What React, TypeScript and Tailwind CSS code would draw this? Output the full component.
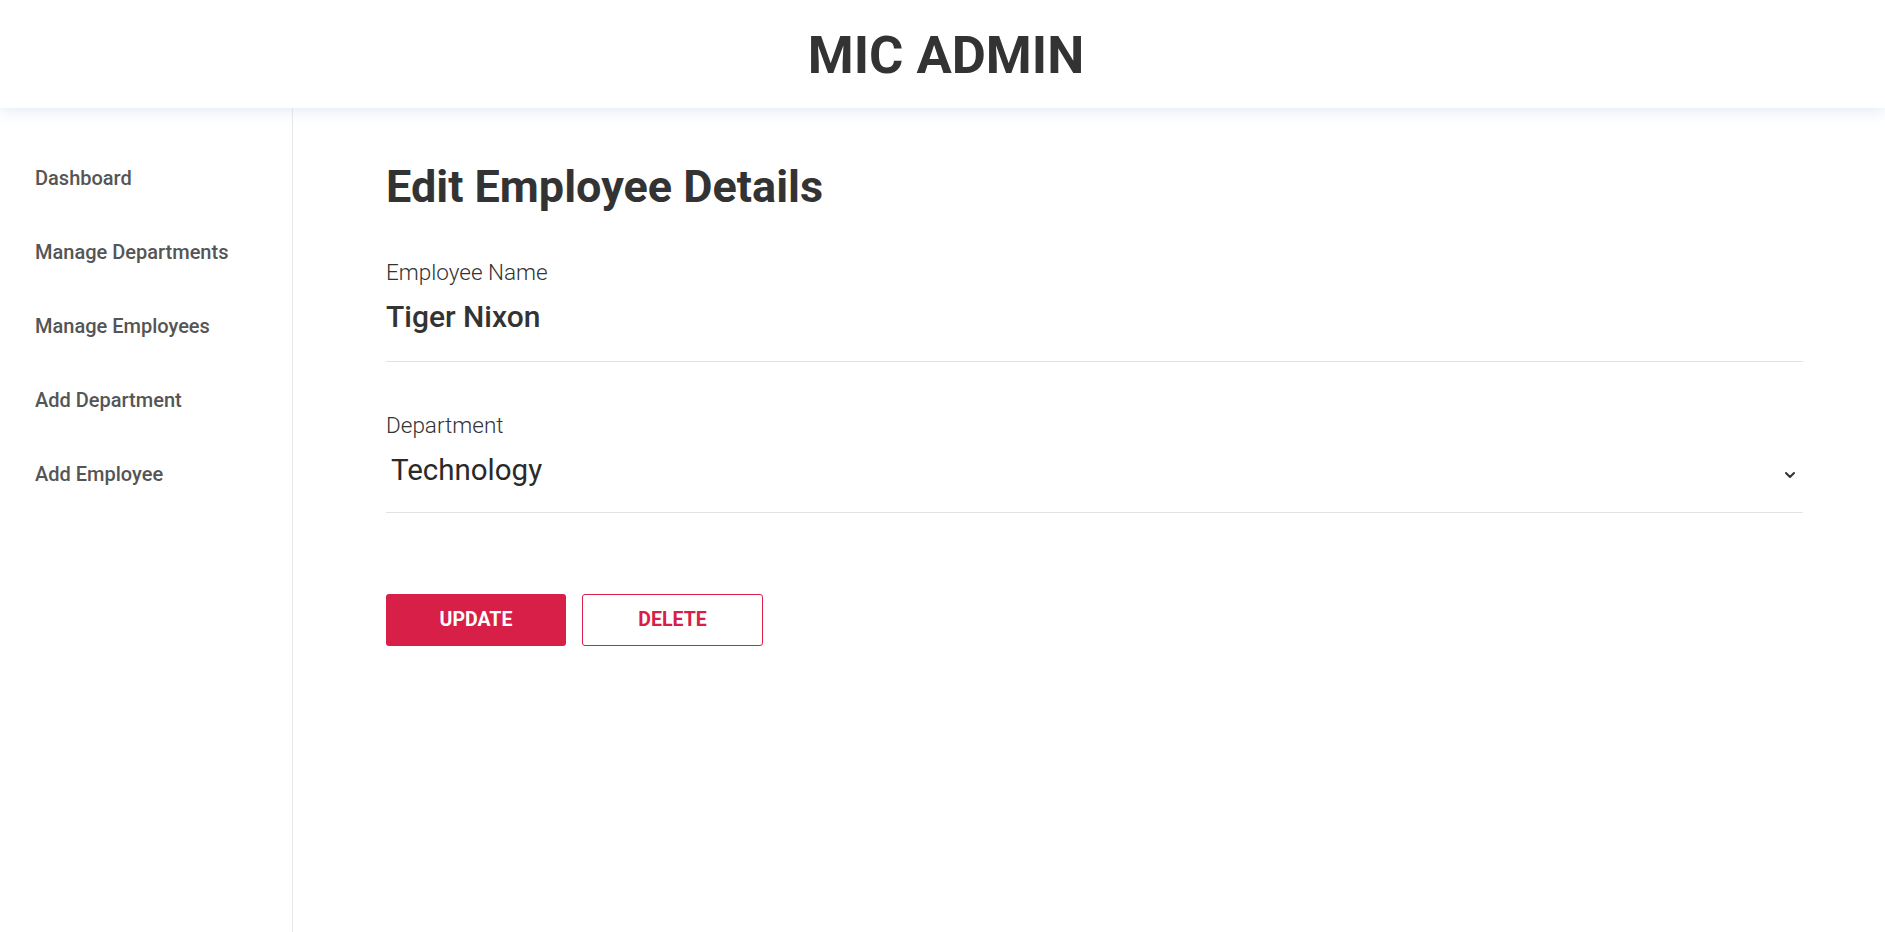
import React from 'react';
import { ChevronDown } from 'lucide-react';

const navItems = ['Dashboard', 'Manage Departments', 'Manage Employees', 'Add Department', 'Add Employee'];

const App: React.FC = () => {
  return (
    <div className="h-screen flex flex-col bg-white text-[#333] font-['Roboto',sans-serif]">
      {/* header */}
      <header className="h-[108px] shrink-0 flex items-center justify-center bg-white shadow-[0_4px_14px_rgba(200,215,230,0.45)] relative z-10">
        <h1 className="text-[52.5px] font-bold leading-none pt-[2px] pl-[7px] text-[#333]">MIC ADMIN</h1>
      </header>

      <div className="flex flex-1 min-h-0">
        {/* sidebar */}
        <aside className="w-[293px] shrink-0 border-r border-[#e6e8eb] pt-[58px] pl-[35px]">
          <ul className="flex flex-col gap-[50px]">
            {navItems.map((item) => (
              <li key={item} className="text-[20px] leading-[24px] font-medium text-[#555] cursor-pointer">
                {item}
              </li>
            ))}
          </ul>
        </aside>

        {/* main */}
        <main className="flex-1 pl-[93px] pr-[82px] pt-[52px]">
          <h2 className="text-[45px] font-bold leading-[54px] text-[#333]">Edit Employee Details</h2>

          <div className="mt-[45px] border-b border-[#e2e2e2] pb-[26px]">
            <label className="block text-[22.5px] leading-[27px] font-light text-[#333]">Employee Name</label>
            <div className="mt-[13px] text-[30px] leading-[36px] font-medium text-[#333]">Tiger Nixon</div>
          </div>

          <div className="mt-[50px] border-b border-[#e2e2e2] pb-[24px]">
            <label className="block text-[22.5px] leading-[27px] font-light text-[#333]">Department</label>
            <div className="mt-[13px] flex items-center justify-between">
              <span className="pl-[5px] text-[29.5px] leading-[36px] font-normal text-[#2a2a2a]">Technology</span>
              <ChevronDown size={16} strokeWidth={3} className="mr-[5px] mt-[10px] text-[#333]" />
            </div>
          </div>

          <div className="mt-[81px] flex gap-[16px]">
            <button className="w-[180px] h-[52px] rounded-[3px] bg-[#d71f48] text-white text-[19.5px] font-bold">
              UPDATE
            </button>
            <button className="w-[181px] h-[52px] rounded-[3px] border border-[#d71f48] bg-white text-[#d71f48] text-[19.5px] font-bold">
              DELETE
            </button>
          </div>
        </main>
      </div>
    </div>
  );
};

export default App;
